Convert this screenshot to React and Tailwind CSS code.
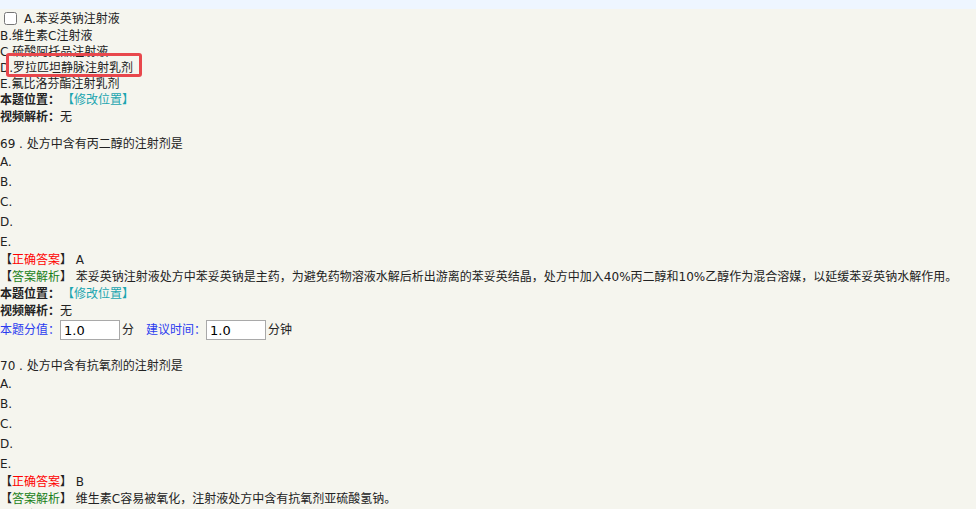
const font = { fontFamily: '"DejaVu Sans", "Noto Sans CJK SC", sans-serif' };

function Info({ label, children }) {
  return (
    <div className="h-[17px] leading-[17px]">
      <span className="font-bold">{label}：</span>
      {children}
    </div>
  );
}

function Options() {
  return (
    <div>
      {['A.', 'B.', 'C.', 'D.', 'E.'].map((o) => (
        <div key={o} className="h-[20px] leading-[20px]">
          {o}
        </div>
      ))}
    </div>
  );
}

function Answer({ letter, children }) {
  return (
    <>
      <div className="h-[17px] leading-[17px]">
        【<span className="text-[#ff0000]">正确答案</span>】 {letter}
      </div>
      <div className="h-[17px] leading-[17px]">
        【<span className="text-[#1a7f1a]">答案解析</span>】 {children}
      </div>
    </>
  );
}

function Position() {
  return (
    <Info label="本题位置">
      <span className="ml-2 text-[#1ba5b0]">【修改位置】</span>
    </Info>
  );
}

export default function App() {
  return (
    <div className="relative min-h-[509px] bg-[#f5f5ee] text-[12px] text-[#222]" style={font}>
      <div className="h-[9px] bg-[#eef6ff]" />

      <div className="flex h-[19px] items-center">
        <input type="checkbox" className="ml-[4px] mr-[7px] h-[13px] w-[13px]" />
        <span>A.苯妥英钠注射液</span>
      </div>
      <div className="h-[16px] leading-[16px]">B.维生素C注射液</div>
      <div className="h-[16px] leading-[16px]">C.硫酸阿托品注射液</div>
      <div className="h-[16px] leading-[16px]">D.罗拉匹坦静脉注射乳剂</div>
      <div className="h-[16px] leading-[16px]">E.氟比洛芬酯注射乳剂</div>
      <Position />
      <Info label="视频解析">无</Info>

      <div className="mt-[10px] h-[16px] leading-[16px]">69 . 处方中含有丙二醇的注射剂是</div>
      <Options />
      <Answer letter="A">
        苯妥英钠注射液处方中苯妥英钠是主药，为避免药物溶液水解后析出游离的苯妥英结晶，处方中加入40%丙二醇和10%乙醇作为混合溶媒，以延缓苯妥英钠水解作用。
      </Answer>
      <Position />
      <Info label="视频解析">无</Info>
      <div className="flex h-[20px] items-center">
        <span className="text-[#2b3cf0]">本题分值：</span>
        <input
          defaultValue="1.0"
          className="h-[20px] w-[60px] border border-[#a9a9a9] bg-white px-[3px] text-[13px] text-black outline-none"
        />
        <span className="ml-[2px]">分</span>
        <span className="ml-[12px] text-[#2b3cf0]">建议时间：</span>
        <input
          defaultValue="1.0"
          className="h-[20px] w-[60px] border border-[#a9a9a9] bg-white px-[3px] text-[13px] text-black outline-none"
        />
        <span className="ml-[2px]">分钟</span>
      </div>

      <div className="mt-[18px] h-[16px] leading-[16px]">70 . 处方中含有抗氧剂的注射剂是</div>
      <Options />
      <Answer letter="B">维生素C容易被氧化，注射液处方中含有抗氧剂亚硫酸氢钠。</Answer>
      <Position />

      <div className="pointer-events-none absolute left-[6px] top-[53px] h-[24px] w-[136px] rounded-[3px] border-[3px] border-[#e8474c]" />
    </div>
  );
}
